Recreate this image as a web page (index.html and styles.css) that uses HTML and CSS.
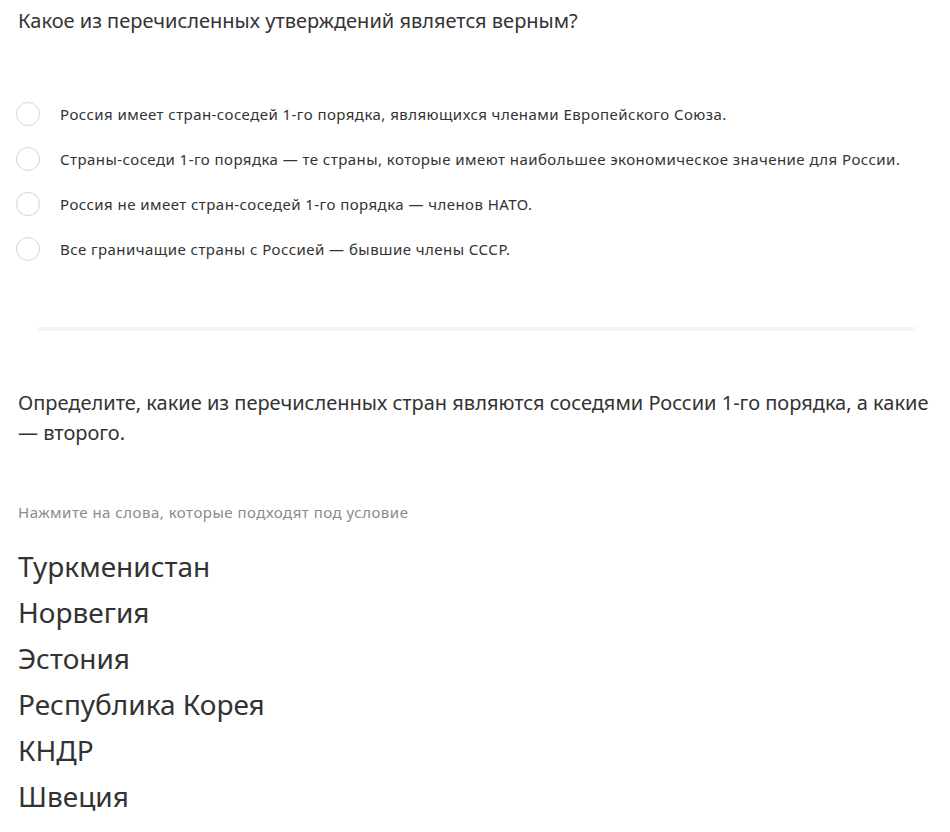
FILE: index.html
```html
<!DOCTYPE html>
<html lang="ru">
<head>
    <meta charset="UTF-8">
    <meta name="viewport" content="width=device-width, initial-scale=1.0">
    <title>Задание</title>
    <link rel="stylesheet" href="styles.css">
</head>
<body>
    <div class="task">
        <div class="question">Какое из перечисленных утверждений является верным?</div>

        <div class="options">
            <label class="option"><span class="radio"></span>Россия имеет стран-соседей 1-го порядка, являющихся членами Европейского Союза.</label>
            <label class="option"><span class="radio"></span>Страны-соседи 1-го порядка — те страны, которые имеют наибольшее экономическое значение для России.</label>
            <label class="option"><span class="radio"></span>Россия не имеет стран-соседей 1-го порядка — членов НАТО.</label>
            <label class="option"><span class="radio"></span>Все граничащие страны с Россией — бывшие члены СССР.</label>
        </div>
    </div>

    <div class="divider"></div>

    <div class="task">
        <div class="question">Определите, какие из перечисленных стран являются соседями России 1-го порядка, а какие — второго.</div>

        <div class="hint">Нажмите на слова, которые подходят под условие</div>

        <div class="words">
            <div class="word">Туркменистан</div>
            <div class="word">Норвегия</div>
            <div class="word">Эстония</div>
            <div class="word">Республика Корея</div>
            <div class="word">КНДР</div>
            <div class="word">Швеция</div>
        </div>
    </div>
</body>
</html>
```

FILE: styles.css
```css
body {
    font-family: 'Noto Sans', sans-serif;
    margin: 0;
    padding: 0 18px;
    background: #fff;
    color: #333;
}
.question {
    font-size: 20px;
    line-height: 30px;
    color: #333;
}
.task:first-child .question {
    padding-top: 6px;
}
.options {
    margin-top: 55px;
}
.option {
    display: flex;
    align-items: center;
    height: 45px;
    font-size: 15px;
    letter-spacing: 0.45px;
    color: #333;
    cursor: pointer;
}
.radio {
    width: 22px;
    height: 22px;
    border: 1px solid #d6d6d6;
    border-radius: 50%;
    margin-left: -2px;
    margin-right: 20px;
    flex-shrink: 0;
}
.divider {
    height: 4px;
    background: #f3f5f6;
    margin: 56px 16px 57px 20px;
}
.hint {
    margin-top: 54px;
    font-size: 15px;
    letter-spacing: 0.5px;
    color: #8a8a8a;
}
.words {
    margin-top: 21px;
}
.word {
    font-size: 28px;
    line-height: 46px;
    color: #333;
    cursor: pointer;
}
```
